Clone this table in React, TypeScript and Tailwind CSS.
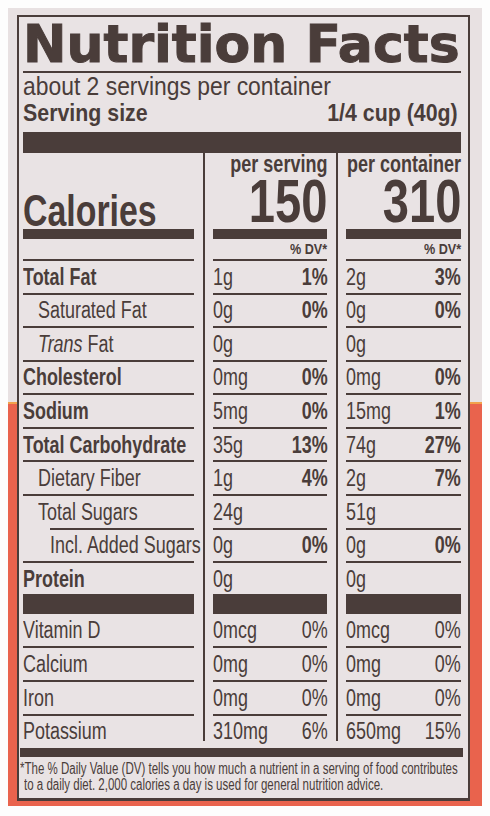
type Nutrient = {
  label: string;
  italic?: string;
  bold?: boolean;
  indent?: 0 | 1 | 2;
  lineIndent?: boolean;
  serving: string;
  servingDv?: string;
  container: string;
  containerDv?: string;
};

type Kind = "main" | "protein" | "vit" | "last";

const main: Nutrient[] = [
  { label: "Total Fat", bold: true, serving: "1g", servingDv: "1%", container: "2g", containerDv: "3%" },
  { label: "Saturated Fat", indent: 1, serving: "0g", servingDv: "0%", container: "0g", containerDv: "0%" },
  { label: " Fat", italic: "Trans", indent: 1, serving: "0g", container: "0g" },
  { label: "Cholesterol", bold: true, serving: "0mg", servingDv: "0%", container: "0mg", containerDv: "0%" },
  { label: "Sodium", bold: true, serving: "5mg", servingDv: "0%", container: "15mg", containerDv: "1%" },
  { label: "Total Carbohydrate", bold: true, serving: "35g", servingDv: "13%", container: "74g", containerDv: "27%" },
  { label: "Dietary Fiber", indent: 1, serving: "1g", servingDv: "4%", container: "2g", containerDv: "7%" },
  { label: "Total Sugars", indent: 1, lineIndent: true, serving: "24g", container: "51g" },
  { label: "Incl. Added Sugars", indent: 2, serving: "0g", servingDv: "0%", container: "0g", containerDv: "0%" },
];

const protein: Nutrient = { label: "Protein", bold: true, serving: "0g", container: "0g" };

const vitamins: Nutrient[] = [
  { label: "Vitamin D", serving: "0mcg", servingDv: "0%", container: "0mcg", containerDv: "0%" },
  { label: "Calcium", serving: "0mg", servingDv: "0%", container: "0mg", containerDv: "0%" },
  { label: "Iron", serving: "0mg", servingDv: "0%", container: "0mg", containerDv: "0%" },
];

const potassium: Nutrient = { label: "Potassium", serving: "310mg", servingDv: "6%", container: "650mg", containerDv: "15%" };

const heightFor = (kind: Kind) =>
  kind === "main" ? "h-[33.6px]" : kind === "protein" ? "h-[31px]" : kind === "vit" ? "h-[34px]" : "h-[25px]";

const textRow = (kind: Kind) =>
  kind === "last" ? "items-start leading-[30px]" : "items-center leading-[22px]";

function LabelCell({ n, kind }: { n: Nutrient; kind: Kind }) {
  const indent = n.indent === 1 ? "pl-[15px]" : n.indent === 2 ? "pl-[27px]" : "pl-0";
  return (
    <div className={`${heightFor(kind)} flex flex-col`}>
      <div className={`flex-1 flex ${textRow(kind)} text-[23px] whitespace-nowrap ${indent}`}>
        <span className={`inline-block origin-left scale-x-[0.78] ${n.bold ? "font-bold" : "font-normal"}`}>
          {n.italic && <i>{n.italic}</i>}
          {n.label}
        </span>
      </div>
      {(kind === "main" || kind === "vit") && (
        <div className={n.lineIndent ? "h-[2px] ml-[27px] bg-[#4a3d3a]" : "h-[2px] bg-[#4a3d3a]"} />
      )}
    </div>
  );
}

function ValueCell({ amount, dv, boldDv, kind }: { amount: string; dv?: string; boldDv: boolean; kind: Kind }) {
  return (
    <div className={`${heightFor(kind)} flex flex-col`}>
      <div className={`flex-1 flex ${textRow(kind)} text-[23px] whitespace-nowrap`}>
        <div className="w-[147px] shrink-0 flex justify-between origin-left scale-x-[0.78]">
          <span>{amount}</span>
          {dv && <span className={boldDv ? "font-bold" : "font-normal"}>{dv}</span>}
        </div>
      </div>
      {(kind === "main" || kind === "vit") && <div className="h-[2px] bg-[#4a3d3a]" />}
    </div>
  );
}

function ValueColumn({ title, calories, which }: { title: string; calories: string; which: "serving" | "container" }) {
  const get = (n: Nutrient) => (which === "serving" ? [n.serving, n.servingDv] : [n.container, n.containerDv]);
  return (
    <div className="h-full border-l-2 border-[#4a3d3a] pl-[8px] flex flex-col">
      <div className="flex flex-col">
        <div className="h-[22px] flex justify-end text-[24px] leading-[22px] font-bold whitespace-nowrap">
          <span className="inline-block shrink-0 origin-right scale-x-[0.75]">{title}</span>
        </div>
        <div className="h-[52px] flex justify-end text-[62px] leading-[52px] font-bold">
          <span className="inline-block shrink-0 origin-right scale-x-[0.76]">{calories}</span>
        </div>
        <div className="mt-[2px] h-[10px] bg-[#4a3d3a]" />
        <div className="h-[20px] flex justify-end text-[15px] leading-[20px] font-bold whitespace-nowrap">
          <span className="inline-block shrink-0 origin-right scale-x-[0.84]">% DV*</span>
        </div>
        <div className="h-[2px] bg-[#4a3d3a]" />
      </div>
      {main.map((n) => {
        const [a, d] = get(n);
        return <ValueCell key={n.label} amount={a!} dv={d} boldDv kind="main" />;
      })}
      <ValueCell amount={get(protein)[0]!} boldDv kind="protein" />
      <div className="h-[20px] bg-[#4a3d3a]" />
      {vitamins.map((n) => {
        const [a, d] = get(n);
        return <ValueCell key={n.label} amount={a!} dv={d} boldDv={false} kind="vit" />;
      })}
      <ValueCell amount={get(potassium)[0]!} dv={get(potassium)[1]} boldDv={false} kind="last" />
    </div>
  );
}

export default function App() {
  return (
    <div className="w-[490px] h-[816px] overflow-hidden bg-[#fdfdfd] pt-[8px] pl-[8px]">
      <div className="w-[474px] h-[798px] pt-[7px] pl-[9px] bg-[linear-gradient(to_bottom,#e8e1e2_394px,#f2a14c_394px,#f2a14c_396px,#e9634d_396px)]">
        <div className="w-[453px] h-[786px] overflow-hidden border-2 border-b-[3px] border-[#4a3d3a] bg-[#e9e3e4] pl-[4px] pr-[7px] text-[#4a3d3a] [font-family:'Liberation_Sans',Arial,sans-serif]">
          <div className="h-[54px] text-[52px] leading-[54px] font-bold whitespace-nowrap [font-family:'DejaVu_Sans',sans-serif] [-webkit-text-stroke:1px_#4a3d3a]">
            Nutrition Facts
          </div>
          <div className="h-[2px] bg-[#4a3d3a]" />
          <div className="h-[26px] text-[26px] leading-[26px] whitespace-nowrap">
            <span className="inline-block origin-left scale-x-[0.88]">about 2 servings per container</span>
          </div>
          <div className="h-[28px] flex justify-between text-[24px] leading-[28px] font-bold whitespace-nowrap pr-[3px]">
            <span className="inline-block origin-left scale-x-[0.89]">Serving size</span>
            <span className="inline-block origin-right scale-x-[0.89]">1/4 cup (40g)</span>
          </div>
          <div className="mt-[5px] h-[21px] bg-[#4a3d3a]" />

          <div className="h-[588px] flex gap-[9px]">
            <div className="w-[171px] shrink-0 flex flex-col">
              <div className="flex flex-col">
                <div className="h-[76px] text-[44px] leading-[37px] font-bold flex items-end whitespace-nowrap">
                  <span className="inline-block origin-left scale-x-[0.77]">Calories</span>
                </div>
                <div className="h-[10px] bg-[#4a3d3a]" />
                <div className="h-[20px]" />
                <div className="h-[2px] bg-[#4a3d3a]" />
              </div>
              {main.map((n) => (
                <LabelCell key={n.label} n={n} kind="main" />
              ))}
              <LabelCell n={protein} kind="protein" />
              <div className="h-[20px] bg-[#4a3d3a]" />
              {vitamins.map((n) => (
                <LabelCell key={n.label} n={n} kind="vit" />
              ))}
              <LabelCell n={potassium} kind="last" />
            </div>
            <div className="w-[124px] shrink-0">
              <ValueColumn title="per serving" calories="150" which="serving" />
            </div>
            <div className="w-[125px] shrink-0">
              <ValueColumn title="per container" calories="310" which="container" />
            </div>
          </div>

          <div className="mt-[7px] h-[9px] bg-[#4a3d3a] -ml-[3px] mr-[-2px]" />
          <div className="pt-[4px] -ml-[3px] text-[16px] leading-[16px] whitespace-nowrap overflow-hidden">
            <p>
              <span className="inline-block origin-left scale-x-[0.72]">
                *The % Daily Value (DV) tells you how much a nutrient in a serving of food contributes
              </span>
            </p>
            <p className="pl-[4px]">
              <span className="inline-block origin-left scale-x-[0.72]">
                to a daily diet. 2,000 calories a day is used for general nutrition advice.
              </span>
            </p>
          </div>
        </div>
      </div>
    </div>
  );
}
